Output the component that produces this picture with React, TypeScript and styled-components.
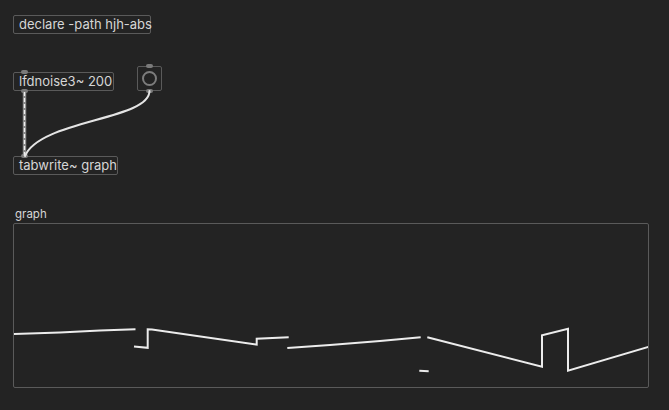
import styled, { createGlobalStyle } from 'styled-components'

const GlobalStyle = createGlobalStyle`
  html, body {
    margin: 0;
    padding: 0;
    background: #232323;
  }
`

const Canvas = styled.div`
  position: relative;
  width: 669px;
  height: 410px;
  overflow: hidden;
  background: #232323;
  font-family: Inter, "Noto Sans", sans-serif;
  color: #d6d6d6;
`

// patch objects sit on a free canvas, so their place is the content itself
const Node = styled.div<{ $x: number; $y: number }>`
  position: absolute;
  left: ${({ $x }) => $x}px;
  top: ${({ $y }) => $y}px;
`

const ObjectBox = styled.div<{ $w: number }>`
  position: relative;
  width: ${({ $w }) => $w}px;
  height: 19px;
  box-sizing: border-box;
  border: 1px solid #5a5a5a;
  border-radius: 2px;
  padding-left: 5px;
  font-size: 13px;
  line-height: 17px;
  white-space: nowrap;
`

const Port = styled.span<{ $bottom?: boolean; $left?: number }>`
  position: absolute;
  left: ${({ $left = 7 }) => $left}px;
  ${({ $bottom }) => ($bottom ? 'bottom: -3px;' : 'top: -3px;')}
  width: 7px;
  height: 4px;
  border-radius: 2px;
  background: #7a7a7a;
`

const BangBox = styled.div`
  position: relative;
  width: 25px;
  height: 25px;
  box-sizing: border-box;
  border: 1px solid #5a5a5a;
  border-radius: 2px;
  display: flex;
  align-items: center;
  justify-content: center;
`

const BangCircle = styled.div`
  width: 15px;
  height: 15px;
  box-sizing: border-box;
  border: 2px solid #7c7c7c;
  border-radius: 50%;
`

const GraphWidget = styled.div`
  display: flex;
  flex-direction: column;
  gap: 2px;
`

const GraphLabel = styled.div`
  padding-left: 2px;
  font-size: 11.5px;
  line-height: 14px;
`

const GraphFrame = styled.div`
  width: 636px;
  height: 165px;
  box-sizing: border-box;
  border: 1px solid #5a5a5a;
  border-radius: 2px;
  overflow: hidden;

  svg {
    display: block;
  }
`

const Cords = styled.svg`
  position: absolute;
  left: 0;
  top: 0;
  pointer-events: none;
`

// table values, in frame coordinates (frame origin at 13,223 on the canvas)
const wave: string[] = [
  '0,111 47,109.5 87,107.5 122.5,106.3',
  '121,123.6 134.7,124.8 134.7,106.3 139,106.5 243.7,121.7 243.7,115.7 275.7,114.3',
  '274.3,125 317,122 367,118 407.7,114.3',
  '414.3,114.3 529,143.7 529,112.3 555,105.7 555,147.7 636,123.7',
  '406.3,147.7 415.7,148.3',
]

export default function App() {
  return (
    <Canvas>
      <GlobalStyle />

      <Node $x={13} $y={15}>
        <ObjectBox $w={138}>declare -path hjh-abs</ObjectBox>
      </Node>

      <Node $x={13} $y={72}>
        <ObjectBox $w={101}>
          lfdnoise3~ 200
          <Port />
          <Port $bottom />
        </ObjectBox>
      </Node>

      <Node $x={137} $y={66}>
        <BangBox>
          <BangCircle />
          <Port $left={8} />
          <Port $bottom $left={8} />
        </BangBox>
      </Node>

      <Node $x={13} $y={156}>
        <ObjectBox $w={105}>
          tabwrite~ graph
          <Port />
        </ObjectBox>
      </Node>

      <Node $x={13} $y={207}>
        <GraphWidget>
          <GraphLabel>graph</GraphLabel>
          <GraphFrame>
            <svg width={634} height={163} viewBox="1 1 634 163">
              {wave.map((pts) => (
                <polyline
                  key={pts}
                  points={pts}
                  fill="none"
                  stroke="#ececec"
                  strokeWidth={2}
                />
              ))}
            </svg>
          </GraphFrame>
        </GraphWidget>
      </Node>

      <Cords width={669} height={410} viewBox="0 0 669 410">
        <line x1={24.5} y1={92} x2={24.5} y2={156} stroke="#8a8a8a" strokeWidth={3.5} />
        <line
          x1={24.5}
          y1={92}
          x2={24.5}
          y2={156}
          stroke="#f0f0f0"
          strokeWidth={1.3}
          strokeDasharray="4 2"
        />
        <path
          d="M149.5 91 C 149.5 120, 40 120, 25 156"
          fill="none"
          stroke="#e4e4e4"
          strokeWidth={2}
          strokeLinecap="round"
        />
      </Cords>
    </Canvas>
  )
}
